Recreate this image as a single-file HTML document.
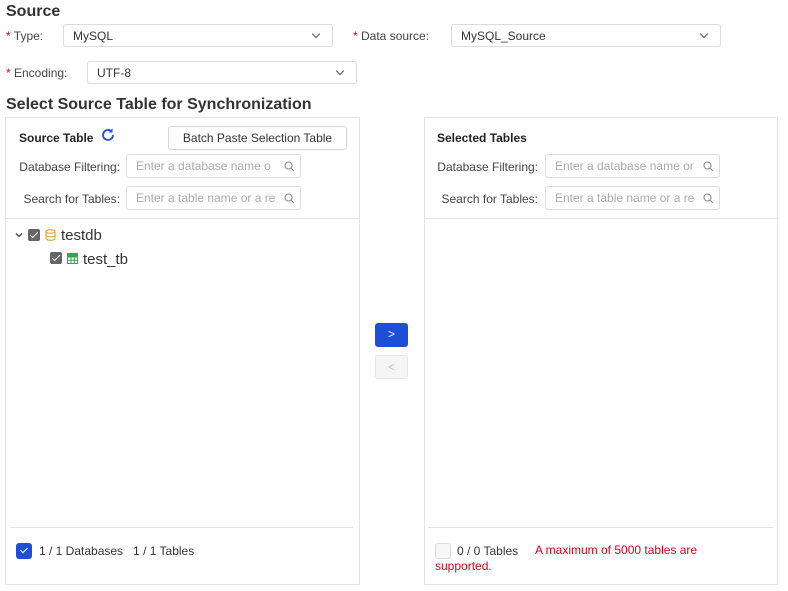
<!DOCTYPE html>
<html><head><meta charset="utf-8"><style>
body{margin:0;width:788px;height:591px;background:#fff;font-family:"Liberation Sans",sans-serif;color:#333;position:relative;overflow:hidden;font-size:12px}
.a{position:absolute;white-space:nowrap}
.sel{position:absolute;border:1px solid #dcdcdc;border-radius:3px;background:#fff;box-sizing:border-box;height:23px;font-size:12px;line-height:22px;padding-left:9px;color:#333}
.sel:after{content:"";position:absolute;right:13px;top:6px;width:5px;height:5px;border-right:1.2px solid #555;border-bottom:1.2px solid #555;transform:rotate(45deg)}
.star{color:#d9001b}
.panel{position:absolute;border:1px solid #e3e3e3;box-sizing:border-box}
.inp{position:absolute;border:1px solid #dcdcdc;border-radius:3px;box-sizing:border-box;height:24px;width:175px;color:#aaa;font-size:12px;line-height:23px;padding-left:9px;overflow:hidden}
.inp svg{position:absolute;right:5px;top:6px}
.lbl{position:absolute;font-size:12px;color:#444;text-align:right}
.cb{position:absolute;width:12px;height:12px;background:#666;border-radius:2px}
.cb:after{content:"";position:absolute;left:4px;top:1px;width:3px;height:7px;border-right:1.5px solid #fff;border-bottom:1.5px solid #fff;transform:rotate(45deg)}
</style></head><body>
<div class="a" style="left:6px;top:3px;font-size:16px;font-weight:bold;color:#333">Source</div>
<div class="a" style="left:6px;top:29px;color:#444"><span class="star">*</span> Type:</div>
<div class="sel" style="left:63px;top:24px;width:270px">MySQL</div>
<div class="a" style="left:353px;top:29px;color:#444"><span class="star">*</span> Data source:</div>
<div class="sel" style="left:451px;top:24px;width:270px">MySQL_Source</div>
<div class="a" style="left:6px;top:66px;color:#444"><span class="star">*</span> Encoding:</div>
<div class="sel" style="left:87px;top:61px;width:270px">UTF-8</div>
<div class="a" style="left:6px;top:96px;font-size:16px;font-weight:bold;color:#333">Select Source Table for Synchronization</div>

<div class="panel" style="left:5px;top:117px;width:355px;height:468px"></div>
<div class="a" style="left:19px;top:131px;font-weight:bold;font-size:12px;color:#222">Source Table</div>
<svg class="a" style="left:100px;top:127px" width="16" height="16" viewBox="0 0 16 16"><path d="M13 8a5 5 0 1 1-1.5-3.6" fill="none" stroke="#1f4ed8" stroke-width="1.8"/><path d="M12.5 1.5v4h-4z" fill="#1f4ed8"/></svg>
<div class="a" style="left:168px;top:126px;width:179px;height:24px;border:1px solid #d5d5d5;border-radius:3px;box-sizing:border-box;text-align:center;line-height:23px;color:#333">Batch Paste Selection Table</div>
<div class="lbl" style="left:10px;top:160px;width:110px">Database Filtering:</div>
<div class="inp" style="left:126px;top:154px">Enter a database name o<svg width="11" height="11" viewBox="0 0 11 11"><circle cx="4.5" cy="4.5" r="3.5" fill="none" stroke="#888" stroke-width="1.1"/><path d="M7 7l3 3" stroke="#888" stroke-width="1.1"/></svg></div>
<div class="lbl" style="left:10px;top:192px;width:110px">Search for Tables:</div>
<div class="inp" style="left:126px;top:186px">Enter a table name or a re<svg width="11" height="11" viewBox="0 0 11 11"><circle cx="4.5" cy="4.5" r="3.5" fill="none" stroke="#888" stroke-width="1.1"/><path d="M7 7l3 3" stroke="#888" stroke-width="1.1"/></svg></div>
<div class="a" style="left:6px;top:218px;width:353px;height:1px;background:#e3e3e3"></div>
<svg class="a" style="left:15px;top:231px" width="8" height="8" viewBox="0 0 8 8"><path d="M1 2.5l3 3 3-3" fill="none" stroke="#444" stroke-width="1.3"/></svg>
<div class="cb" style="left:28px;top:229px"></div>
<svg class="a" style="left:45px;top:229px" width="11" height="12" viewBox="0 0 11 12"><ellipse cx="5.5" cy="2.5" rx="4.5" ry="1.8" fill="none" stroke="#f0a020" stroke-width="1.1"/><path d="M1 2.5v7c0 1 2 1.8 4.5 1.8s4.5-.8 4.5-1.8v-7M1 6c0 1 2 1.8 4.5 1.8S10 7 10 6" fill="none" stroke="#f0a020" stroke-width="1.1"/></svg>
<div class="a" style="left:61px;top:227px;font-size:15px;color:#333">testdb</div>
<div class="cb" style="left:50px;top:252px"></div>
<svg class="a" style="left:67px;top:253px" width="11" height="11" viewBox="0 0 11 11"><rect x=".5" y=".5" width="10" height="10" fill="none" stroke="#2fa84f"/><path d="M.5 4h10M.5 7.3h10M4 4v6.5M7.3 4v6.5" stroke="#2fa84f"/><rect x=".5" y=".5" width="10" height="3" fill="#2fa84f"/></svg>
<div class="a" style="left:83px;top:251px;font-size:15px;color:#333">test_tb</div>
<div class="a" style="left:10px;top:527px;width:343px;height:1px;background:#e3e3e3"></div>
<div class="a" style="left:16px;top:543px;width:16px;height:16px;background:#1f4ed8;border-radius:3px"></div>
<div class="a" style="left:22px;top:546px;width:3px;height:6px;border-right:1.2px solid #fff;border-bottom:1.2px solid #fff;transform:rotate(45deg)"></div>
<div class="a" style="left:39px;top:544px;color:#333">1 / 1 Databases &nbsp; 1 / 1 Tables</div>

<div class="a" style="left:375px;top:323px;width:33px;height:24px;background:#1f4ed8;border-radius:3px;color:#fff;text-align:center;line-height:23px;font-size:12px">&gt;</div>
<div class="a" style="left:375px;top:355px;width:33px;height:24px;background:#f5f5f5;border:1px solid #e6e6e6;box-sizing:border-box;border-radius:3px;color:#bbb;text-align:center;line-height:22px">&lt;</div>

<div class="panel" style="left:424px;top:117px;width:354px;height:468px"></div>
<div class="a" style="left:437px;top:131px;font-weight:bold;font-size:12px;color:#222">Selected Tables</div>
<div class="lbl" style="left:428px;top:160px;width:110px">Database Filtering:</div>
<div class="inp" style="left:545px;top:154px">Enter a database name or<svg width="11" height="11" viewBox="0 0 11 11"><circle cx="4.5" cy="4.5" r="3.5" fill="none" stroke="#888" stroke-width="1.1"/><path d="M7 7l3 3" stroke="#888" stroke-width="1.1"/></svg></div>
<div class="lbl" style="left:428px;top:192px;width:110px">Search for Tables:</div>
<div class="inp" style="left:545px;top:186px">Enter a table name or a re<svg width="11" height="11" viewBox="0 0 11 11"><circle cx="4.5" cy="4.5" r="3.5" fill="none" stroke="#888" stroke-width="1.1"/><path d="M7 7l3 3" stroke="#888" stroke-width="1.1"/></svg></div>
<div class="a" style="left:425px;top:218px;width:352px;height:1px;background:#e3e3e3"></div>
<div class="a" style="left:428px;top:527px;width:345px;height:1px;background:#e3e3e3"></div>
<div class="a" style="left:435px;top:543px;width:16px;height:16px;background:#f7f7f7;border:1px solid #ddd;box-sizing:border-box;border-radius:3px"></div>
<div class="a" style="left:457px;top:544px;color:#333">0 / 0 Tables</div>
<div class="a" style="left:535px;top:543px;color:#d9001b">A maximum of 5000 tables are</div>
<div class="a" style="left:435px;top:559px;color:#d9001b">supported.</div>
</body></html>
